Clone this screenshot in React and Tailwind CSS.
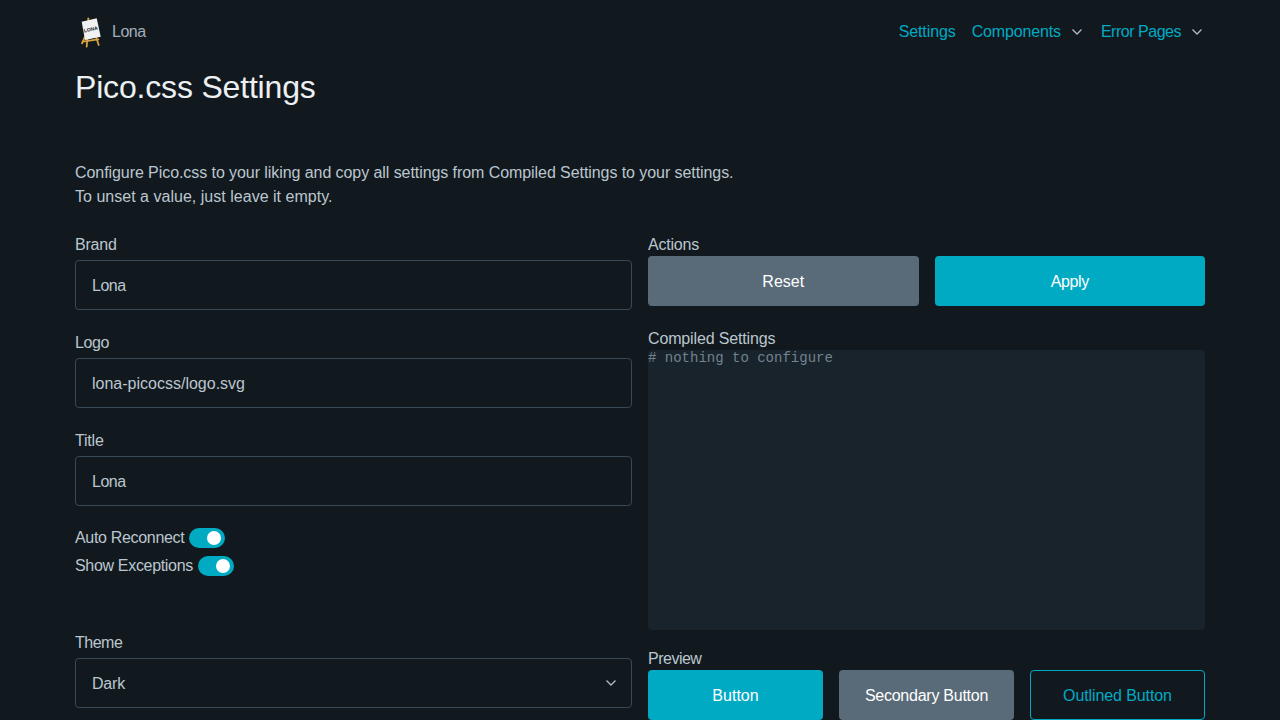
import React from "react";

const Chevron = ({ className = "" }) => (
  <svg width="12" height="8" viewBox="0 0 12 8" fill="none" stroke="#b3bac3" strokeWidth="1.3" className={className}>
    <path d="M1.5 1.5 L6 6 L10.5 1.5" />
  </svg>
);

const Logo = () => (
  <svg width="26" height="32" viewBox="0 0 26 32" className="shrink-0">
    <g stroke="#d9a13f" strokeWidth="1.8" strokeLinecap="round">
      <path d="M7 20.7 L4 27.3" />
      <path d="M9.3 23.3 L8.7 30.7" />
      <path d="M18 20.7 L20.7 29" />
      <path d="M4.7 25.7 L20.3 23.3" />
      <path d="M10.3 2.3 L10.3 5" />
    </g>
    <polygon points="3.7,5.7 18.7,2.3 22.7,20.7 7,24" fill="#f0f1f2" />
    <text x="13" y="15" textAnchor="middle" fontSize="5" fontWeight="700" fill="#222" fontFamily="'Liberation Sans', sans-serif" transform="rotate(-12 13 14)">LONA</text>
  </svg>
);

const Label = ({ children, className = "tracking-[-0.2px]" }) => (
  <div className={`h-6 leading-[26px] ${className}`}>{children}</div>
);

const Field = ({ label, value, select, labelClass, valueClass = "" }) => (
  <div className="mb-5">
    <div className="mb-1">
      <Label className={labelClass}>{label}</Label>
    </div>
    <div className="h-[50px] rounded border border-[#374956] pl-4 pr-[14px] flex items-center justify-between">
      <span className={`pt-[2px] ${valueClass}`}>{value}</span>
      {select && <Chevron />}
    </div>
  </div>
);

const Toggle = ({ label, gap }) => (
  <div className="h-7 flex items-center">
    <span className={`tracking-[-0.32px] ${gap}`}>{label}</span>
    <span className="w-9 h-5 rounded-full bg-[#01aac3] flex items-center justify-end pr-1">
      <span className="w-[14px] h-[14px] rounded-full bg-white" />
    </span>
  </div>
);

const Btn = ({ children, kind, className = "" }) => {
  const cls = {
    primary: "bg-[#01aac3] text-white",
    secondary: "bg-[#596b78] text-white",
    outline: "border border-[#01aac3] text-[#01aac3]",
  }[kind];
  return <div className={`h-[50px] pt-[2px] rounded flex items-center justify-center ${cls} ${className}`}>{children}</div>;
};

export default function App() {
  return (
    <div className="h-[720px] overflow-hidden bg-[#11191f] text-[#bbc6ce] text-base leading-6 font-['Liberation_Sans',sans-serif]">
      <div className="w-[1130px] mx-auto">
        <nav className="h-[69px] flex items-start justify-between">
          <div className="flex items-center pt-4 pl-[3px] gap-2">
            <Logo />
            <span className="text-[#a2afb9] tracking-[-0.5px]">Lona</span>
          </div>
          <div className="flex items-center pt-5 text-[#01aac3]">
            <span className="tracking-[-0.1px]">Settings</span>
            <span className="ml-4 tracking-[-0.15px]">Components</span>
            <Chevron className="ml-[10px]" />
            <span className="ml-[18px] tracking-[-0.48px]">Error Pages</span>
            <Chevron className="ml-[10px] mr-[2px]" />
          </div>
        </nav>
        <h1 className="text-[32px] leading-9 text-[#edf0f3] mb-[55px] tracking-[-0.18px]">Pico.css Settings</h1>
        <p className="pt-px mb-[23px]">
          <span className="tracking-[-0.07px]">Configure Pico.css to your liking and copy all settings from Compiled Settings to your settings.</span>
          <br />
          <span className="tracking-[0.02px]">To unset a value, just leave it empty.</span>
        </p>
        <div className="grid grid-cols-2 gap-x-4">
          <div>
            <Field label="Brand" value="Lona" valueClass="tracking-[-0.5px]" />
            <Field label="Logo" value="lona-picocss/logo.svg" labelClass="tracking-[-0.4px]" />
            <div className="mb-[-2px]">
              <Field label="Title" value="Lona" valueClass="tracking-[-0.5px]" />
            </div>
            <Toggle label="Auto Reconnect" gap="mr-[5px]" />
            <Toggle label="Show Exceptions" gap="mr-[5px]" />
            <div className="h-[50px]" />
            <Field label="Theme" value="Dark" select labelClass="tracking-[-0.5px]" valueClass="tracking-[-0.2px]" />
          </div>
          <div>
            <Label>Actions</Label>
            <div className="grid grid-cols-2 gap-4 mb-5">
              <Btn kind="secondary">Reset</Btn>
              <Btn kind="primary" className="tracking-[-0.4px]">Apply</Btn>
            </div>
            <Label className="tracking-[-0.15px]">Compiled Settings</Label>
            <div className="h-[280px] rounded bg-[#18232c] mb-4 text-sm leading-4 font-['Liberation_Mono',monospace] text-[#73828c]">
              # nothing to configure
            </div>
            <Label className="tracking-[-0.5px]">Preview</Label>
            <div className="grid grid-cols-3 gap-4">
              <Btn kind="primary">Button</Btn>
              <Btn kind="secondary" className="tracking-[-0.25px]">Secondary Button</Btn>
              <Btn kind="outline" className="tracking-[-0.1px]">Outlined Button</Btn>
            </div>
          </div>
        </div>
      </div>
    </div>
  );
}
